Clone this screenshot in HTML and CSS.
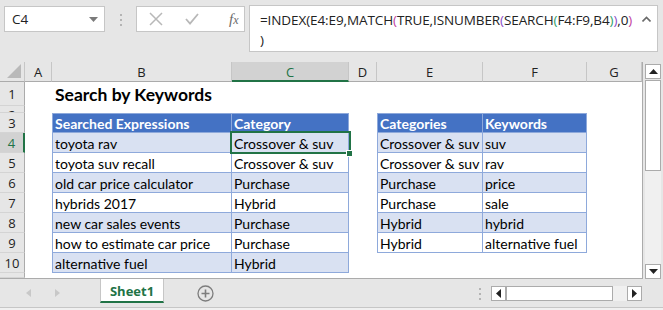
FILE: index.html
```html
<!DOCTYPE html>
<html lang="en">

<head>
    <meta charset="UTF-8">
    <meta name="viewport" content="width=device-width, initial-scale=1.0">
    <title>Search by Keywords</title>
    <link rel="stylesheet" href="styles.css">
</head>

<body>
    <!-- Name box + formula bar -->
    <div class="toolbar">
        <div class="namebox">
            <span>C4</span>
            <svg class="dropdown" width="9" height="5" viewBox="0 0 9 5"><path d="M0 0h9L4.5 5z" fill="#7a7a7a"/></svg>
        </div>
        <div class="grip"><i></i><i></i><i></i></div>
        <div class="fxbox">
            <svg width="14" height="14" viewBox="0 0 14 14"><path d="M1 1l12 12M13 1L1 13" stroke="#b8b8b8" stroke-width="1.5" fill="none"/></svg>
            <svg width="14" height="12" viewBox="0 0 14 12"><path d="M1 6l4 4.5L13 1" stroke="#b8b8b8" stroke-width="1.8" fill="none"/></svg>
            <span class="fx"><i>f</i><i>x</i></span>
        </div>
        <div class="formula">
            <div class="ftext">=INDEX(E4:E9,MATCH<span class="p2">(</span>TRUE,ISNUMBER<span class="p3">(</span>SEARCH<span class="p4">(</span>F4:F9,B4<span class="p4">)</span><span class="p3">)</span>,0<span class="p2">)</span><br>)</div>
            <svg class="caret" width="9" height="6" viewBox="0 0 9 6"><path d="M0.5 5.5L4.5 1.5L8.5 5.5" stroke="#6a6a6a" stroke-width="1.6" fill="none"/></svg>
        </div>
    </div>

    <!-- Worksheet -->
    <div class="main">
        <div class="sheet">
            <div class="corner"><svg width="14" height="14" viewBox="0 0 14 14"><path d="M14 0V14H0z" fill="#b9b9b9"/></svg></div>
            <div class="ch">A</div>
            <div class="ch">B</div>
            <div class="ch sel">C</div>
            <div class="ch">D</div>
            <div class="ch">E</div>
            <div class="ch">F</div>
            <div class="ch">G</div>

            <div class="rh">1</div>
            <div class="title col-b">Search by Keywords</div>

            <div class="rh short"><span>2</span></div>

            <div class="rh">3</div>
            <div class="tc hd first col-b">Searched Expressions</div>
            <div class="tc hd col-c">Category</div>
            <div class="tc hd first col-e">Categories</div>
            <div class="tc hd col-f">Keywords</div>

            <div class="rh sel">4</div>
            <div class="tc band first col-b">toyota rav</div>
            <div class="tc band col-c active">Crossover &amp; suv</div>
            <div class="tc band first col-e">Crossover &amp; suv</div>
            <div class="tc band col-f">suv</div>

            <div class="rh">5</div>
            <div class="tc first col-b">toyota suv recall</div>
            <div class="tc col-c">Crossover &amp; suv</div>
            <div class="tc first col-e">Crossover &amp; suv</div>
            <div class="tc col-f">rav</div>

            <div class="rh">6</div>
            <div class="tc band first col-b">old car price calculator</div>
            <div class="tc band col-c">Purchase</div>
            <div class="tc band first col-e">Purchase</div>
            <div class="tc band col-f">price</div>

            <div class="rh">7</div>
            <div class="tc first col-b">hybrids 2017</div>
            <div class="tc col-c">Hybrid</div>
            <div class="tc first col-e">Purchase</div>
            <div class="tc col-f">sale</div>

            <div class="rh">8</div>
            <div class="tc band first col-b">new car sales events</div>
            <div class="tc band col-c">Purchase</div>
            <div class="tc band first col-e">Hybrid</div>
            <div class="tc band col-f">hybrid</div>

            <div class="rh">9</div>
            <div class="tc first col-b">how to estimate car price</div>
            <div class="tc col-c">Purchase</div>
            <div class="tc first col-e">Hybrid</div>
            <div class="tc col-f">alternative fuel</div>

            <div class="rh">10</div>
            <div class="tc band first col-b">alternative fuel</div>
            <div class="tc band col-c">Hybrid</div>

            <div class="rh"></div>
        </div>

        <div class="vscroll">
            <div class="sbtn"><svg width="9" height="5" viewBox="0 0 9 5"><path d="M0 5h9L4.5 0z" fill="#222"/></svg></div>
            <div class="vthumb"></div>
            <div class="vtrack"></div>
            <div class="sbtn"><svg width="9" height="5" viewBox="0 0 9 5"><path d="M0 0h9L4.5 5z" fill="#222"/></svg></div>
        </div>
    </div>

    <!-- Sheet tabs + horizontal scroll -->
    <div class="tabbar">
        <div class="nav">
            <svg width="5" height="8" viewBox="0 0 5 8"><path d="M5 0v8L0 4z" fill="#c8c8c8"/></svg>
            <svg width="5" height="8" viewBox="0 0 5 8"><path d="M0 0v8l5-4z" fill="#c8c8c8"/></svg>
        </div>
        <div class="tab">Sheet1</div>
        <div class="addsheet">
            <svg width="17" height="17" viewBox="0 0 17 17"><circle cx="8.5" cy="8.5" r="7.5" stroke="#7d7d7d" stroke-width="1.3" fill="none"/><path d="M8.5 4.5v8M4.5 8.5h8" stroke="#7d7d7d" stroke-width="1.6"/></svg>
        </div>
        <div class="spacer"></div>
        <div class="grip hgrip"><i></i><i></i><i></i></div>
        <div class="hscroll">
            <div class="sbtn"><svg width="5" height="9" viewBox="0 0 5 9"><path d="M5 0v9L0 4.5z" fill="#222"/></svg></div>
            <div class="hthumb"></div>
            <div class="htrack"></div>
            <div class="sbtn"><svg width="5" height="9" viewBox="0 0 5 9"><path d="M0 0v9l5-4.5z" fill="#222"/></svg></div>
        </div>
    </div>
    <div class="status"></div>
</body>

</html>
```

FILE: styles.css
```css
body {
    margin: 0;
    background-color: #e6e6e6;
    font-family: "Open Sans", "Noto Sans", sans-serif;
    width: 663px;
    height: 310px;
    overflow: hidden;
}

/* Formula bar row */
.toolbar {
    height: 62px;
    box-sizing: border-box;
    padding: 5px 5px 0 4px;
    display: flex;
    align-items: flex-start;
}

.namebox {
    width: 101px;
    height: 26px;
    margin-top: 1px;
    box-sizing: border-box;
    background-color: #fff;
    border: 1px solid #c6c6c6;
    display: flex;
    align-items: center;
    padding: 0 6px 0 7px;
    font-size: 13.5px;
    color: #222;
}

.namebox span {
    flex: 1;
}

.grip {
    width: 31px;
    display: flex;
    flex-direction: column;
    align-items: center;
    gap: 3px;
    padding-top: 9px;
}

.grip i {
    display: block;
    width: 2px;
    height: 2px;
    background-color: #b4b4b4;
}

.fxbox {
    width: 109px;
    height: 26px;
    margin-top: 1px;
    box-sizing: border-box;
    background-color: #fff;
    border: 1px solid #c6c6c6;
    display: flex;
    align-items: center;
    padding-left: 12px;
    gap: 22px;
}

.fx {
    font-family: "Liberation Serif", serif;
    font-size: 15px;
    color: #6b6b6b;
    margin-left: 8px;
}

.fx i + i {
    font-size: 12px;
}

.formula {
    flex: 1;
    margin-left: 4px;
    height: 47px;
    box-sizing: border-box;
    background-color: #fff;
    border: 1px solid #c6c6c6;
    display: flex;
    padding: 4px 6px 0 10px;
}

.ftext {
    flex: 1;
    font-size: 13.5px;
    line-height: 20px;
    color: #222;
    letter-spacing: -0.1px;
}

.p2 {
    color: #c2409e;
}

.p3 {
    color: #8a4dc6;
}

.p4 {
    color: #2ea06a;
}

.caret {
    margin-top: 6px;
}

/* Worksheet grid */
.main {
    height: 217px;
    display: flex;
}

.sheet {
    width: 643px;
    height: 217px;
    box-sizing: border-box;
    background-color: #fff;
    border-right: 1px solid #ababab;
    border-bottom: 1px solid #ababab;
    display: grid;
    grid-template-columns: 25px 27px 180px 117px 28px 106px 104px 55px;
    grid-template-rows: 20px 24px 7px repeat(8, 20px) 1fr;
    font-family: Lato, "Liberation Sans", sans-serif;
    font-size: 14px;
    color: #000;
}

.corner {
    background-color: #e6e6e6;
    border-right: 1px solid #c6c6c6;
    border-bottom: 1px solid #ababab;
    display: flex;
    align-items: flex-end;
    justify-content: flex-end;
    padding: 0 3px 3px 0;
}

.ch {
    background-color: #e6e6e6;
    border-right: 1px solid #c6c6c6;
    border-bottom: 1px solid #ababab;
    font-family: "Open Sans", sans-serif;
    font-size: 13px;
    color: #222;
    text-align: center;
    line-height: 20px;
}

.ch:last-of-type {
    border-right: none;
}

.ch.sel {
    background-color: #d2d2d2;
    color: #217346;
    border-bottom: 2px solid #217346;
}

.rh {
    grid-column: 1;
    background-color: #e6e6e6;
    border-right: 1px solid #ababab;
    border-bottom: 1px solid #d4d4d4;
    font-family: "Open Sans", sans-serif;
    font-size: 13px;
    color: #222;
    text-align: center;
    display: flex;
    align-items: center;
    justify-content: center;
    overflow: hidden;
}

.rh.sel {
    background-color: #d2d2d2;
    color: #217346;
    border-right: 2px solid #217346;
}

.rh.short span {
    line-height: 13px;
    margin-top: 12px;
}

.col-b {
    grid-column: 3;
}

.col-c {
    grid-column: 4;
}

.col-e {
    grid-column: 6;
}

.col-f {
    grid-column: 7;
}

.title {
    font-weight: bold;
    font-size: 17.5px;
    padding-left: 3px;
    display: flex;
    align-items: center;
    white-space: nowrap;
}

/* Styling for table cells */
.tc {
    border-right: 1px solid #8ea9db;
    border-bottom: 1px solid #8ea9db;
    padding: 2px 0 0 2px;
    line-height: 18px;
    white-space: nowrap;
    overflow: hidden;
}

.tc.first {
    border-left: 1px solid #8ea9db;
}

.tc.hd {
    background-color: #4472c4;
    color: #fff;
    font-weight: bold;
    border-top: 1px solid #8ea9db;
    padding-top: 1px;
    line-height: 18px;
}

.tc.band {
    background-color: #d9e1f2;
}

.active {
    position: relative;
    overflow: visible;
}

.active::before {
    content: "";
    position: absolute;
    left: -2px;
    top: -2px;
    right: -3px;
    bottom: -2px;
    border: 2px solid #217346;
}

.active::after {
    content: "";
    position: absolute;
    right: -5px;
    bottom: -5px;
    width: 5px;
    height: 5px;
    background-color: #217346;
    border: 1px solid #fff;
}

/* Scrollbars */
.vscroll {
    width: 16px;
    margin: 2px 0 0 2px;
    display: flex;
    flex-direction: column;
}

.sbtn {
    width: 16px;
    height: 15px;
    box-sizing: border-box;
    background-color: #fff;
    border: 1px solid #ababab;
    display: flex;
    align-items: center;
    justify-content: center;
}

.vthumb {
    height: 91px;
    margin-top: 1px;
    box-sizing: border-box;
    background-color: #fff;
    border: 1px solid #ababab;
}

.vtrack {
    flex: 1;
    background-color: #f0f0f0;
}

.tabbar {
    height: 28px;
    display: flex;
    align-items: flex-start;
}

.nav {
    width: 100px;
    display: flex;
    gap: 24px;
    padding: 10px 0 0 26px;
    box-sizing: border-box;
}

.tab {
    width: 64px;
    height: 24px;
    box-sizing: border-box;
    background-color: #fff;
    border-left: 1px solid #c6c6c6;
    border-right: 1px solid #c6c6c6;
    border-bottom: 2px solid #217346;
    color: #217346;
    font-weight: bold;
    font-size: 13px;
    text-align: center;
    line-height: 24px;
}

.addsheet {
    margin: 6px 0 0 33px;
    display: flex;
}

.spacer {
    flex: 1;
}

.hgrip {
    width: 10px;
    padding-top: 9px;
    margin-right: 6px;
}

.hscroll {
    width: 151px;
    height: 15px;
    margin: 7px 21px 0 0;
    display: flex;
}

.hscroll .sbtn {
    width: 15px;
    height: 15px;
}

.hthumb {
    width: 107px;
    box-sizing: border-box;
    background-color: #fff;
    border: 1px solid #ababab;
}

.htrack {
    flex: 1;
    background-color: #f0f0f0;
}

.status {
    height: 3px;
    border-top: 1px solid #c6c6c6;
    background-color: #f0f0f0;
}
```
